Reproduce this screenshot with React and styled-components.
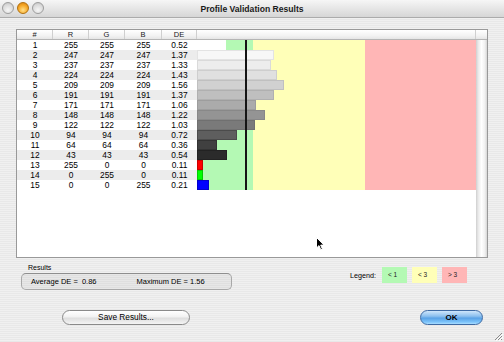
import React from 'react';
import styled, { createGlobalStyle } from 'styled-components';

const GlobalStyle = createGlobalStyle`
  html, body { margin: 0; padding: 0; background: #e9e9e9; }
  body { font-family: "Liberation Sans", Arial, sans-serif; color: #000; }
  * { box-sizing: border-box; }
`;

const data = [
  [1, 255, 255, 255, '0.52'],
  [2, 247, 247, 247, '1.37'],
  [3, 237, 237, 237, '1.33'],
  [4, 224, 224, 224, '1.43'],
  [5, 209, 209, 209, '1.56'],
  [6, 191, 191, 191, '1.37'],
  [7, 171, 171, 171, '1.06'],
  [8, 148, 148, 148, '1.22'],
  [9, 122, 122, 122, '1.03'],
  [10, 94, 94, 94, '0.72'],
  [11, 64, 64, 64, '0.36'],
  [12, 43, 43, 43, '0.54'],
  [13, 255, 0, 0, '0.11'],
  [14, 0, 255, 0, '0.11'],
  [15, 0, 0, 255, '0.21'],
];

const COLS = [36, 36, 36, 37, 35];
const SCALE = 56;
const GREEN = '#b4f9b4';
const YELLOW = '#ffffb8';
const PINK = '#ffb6b6';

const Window = styled.div`
  position: relative;
  width: 504px;
  height: 342px;
  overflow: hidden;
  display: flex;
  flex-direction: column;
  background: repeating-linear-gradient(to bottom, #f0f0f0 0px, #f0f0f0 1px, #e8e8e8 1px, #e8e8e8 2px);
`;

const TitleBar = styled.div`
  position: relative;
  height: 18px;
  flex: none;
  display: flex;
  align-items: center;
  justify-content: center;
  background: linear-gradient(to bottom, #f6f6f6 0%, #e6e6e6 50%, #d6d6d6 100%);
  border-bottom: 1px solid #ababab;
`;

const Lights = styled.div`
  position: absolute;
  left: 2px;
  top: 2px;
  display: flex;
  gap: 3px;
`;

const Light = styled.span`
  width: 12px;
  height: 12px;
  border-radius: 50%;
  border: 1px solid ${p => (p.$active ? '#b0700f' : '#9d9d9d')};
  background: ${p =>
    p.$active
      ? 'radial-gradient(circle at 50% 70%, #ffe08a 0%, #f6a827 55%, #d67c0a 100%)'
      : 'radial-gradient(circle at 50% 70%, #f6f6f6 0%, #dadada 60%, #bcbcbc 100%)'};
`;

const Title = styled.div`
  font-size: 8.6px;
  font-weight: bold;
  color: #1a1a1a;
`;

const Content = styled.div`
  flex: 1;
  display: flex;
  flex-direction: column;
  padding: 11px 16px 0 16px;
`;

const Table = styled.div`
  width: 472px;
  height: 229px;
  border: 1px solid #999;
  background: #fff;
  display: flex;
`;

const TableMain = styled.div`
  flex: 1;
  display: flex;
  flex-direction: column;
`;

const HeaderRow = styled.div`
  height: 10px;
  display: flex;
  border-bottom: 1px solid #b5b5b5;
  background: linear-gradient(to bottom, #ffffff 0%, #f3f3f3 60%, #e6e6e6 100%);
`;

const HeaderCell = styled.div`
  width: ${p => (p.$w ? `${p.$w}px` : 'auto')};
  flex: ${p => (p.$w ? 'none' : '1')};
  border-right: 1px solid #cfcfcf;
  font-size: 7.5px;
  line-height: 9px;
  text-align: center;
  color: #1a1a1a;
`;

const Body = styled.div`
  flex: 1;
  display: flex;
  align-items: flex-start;
`;

const DataList = styled.div`
  width: 180px;
  display: flex;
  flex-direction: column;
`;

const DataRow = styled.div`
  height: 10px;
  display: flex;
  background: ${p => (p.$even ? '#ececec' : '#ffffff')};
`;

const DataCell = styled.div`
  width: ${p => p.$w}px;
  font-size: 8.4px;
  line-height: 10px;
  text-align: center;
  color: #000;
`;

const Chart = styled.div`
  position: relative;
  flex: 1;
  height: 150px;
  display: flex;
  flex-direction: column;
  background: linear-gradient(
    to right,
    ${GREEN} 0px, ${GREEN} 56px,
    ${YELLOW} 56px, ${YELLOW} 168px,
    ${PINK} 168px, ${PINK} 100%
  );
`;

const ChartRow = styled.div`
  height: 10px;
  display: flex;
`;

const Bar = styled.div`
  height: 10px;
  box-shadow: inset 0 0 0 1px rgba(0, 0, 0, ${p => p.$edge});
`;

const AvgLine = styled.div`
  position: absolute;
  top: 0;
  bottom: 0;
  left: 48px;
  width: 2px;
  background: #151515;
`;

const ScrollCol = styled.div`
  width: 11px;
  flex: none;
  display: flex;
  flex-direction: column;
`;

const ScrollCorner = styled.div`
  height: 10px;
  border-bottom: 1px solid #b5b5b5;
  background: linear-gradient(to bottom, #ffffff 0%, #f3f3f3 60%, #e6e6e6 100%);
`;

const ScrollTrack = styled.div`
  flex: 1;
  background: linear-gradient(to right, #cfcfcf 0%, #e9e9e9 20%, #ffffff 50%, #f1f1f1 80%, #d6d6d6 100%);
`;

const FooterRow = styled.div`
  display: flex;
  justify-content: space-between;
  align-items: flex-start;
  margin-top: 5px;
  padding: 0 21px 0 5px;
`;

const Group = styled.div`
  display: flex;
  flex-direction: column;
`;

const GroupLabel = styled.div`
  font-size: 7px;
  line-height: 9px;
  padding-left: 7px;
  color: #000;
`;

const GroupBox = styled.div`
  margin-top: 1px;
  width: 211px;
  height: 17px;
  border: 1px solid #a8a8a8;
  border-top-color: #8e8e8e;
  border-radius: 5px;
  background: rgba(0, 0, 0, 0.035);
  display: flex;
  align-items: center;
  gap: 40px;
  padding-left: 9px;
`;

const Stat = styled.span`
  font-size: 7.5px;
  white-space: pre;
  color: #000;
`;

const Legend = styled.div`
  margin-top: 4px;
  display: flex;
  align-items: center;
  gap: 5px;
`;

const LegendLabel = styled.span`
  font-size: 7.2px;
  margin-right: 1px;
  color: #000;
`;

const Swatch = styled.div`
  width: 25px;
  height: 16px;
  background: ${p => p.$bg};
  font-size: 6.5px;
  line-height: 16px;
  padding-left: 6px;
  white-space: pre;
  color: #222;
`;

const ButtonRow = styled.div`
  margin-top: 20px;
  display: flex;
  justify-content: space-between;
  padding: 0 5px 0 46px;
`;

const PushButton = styled.div`
  width: 128px;
  height: 15px;
  border-radius: 8px;
  border: 1px solid #8a8a8a;
  background: linear-gradient(to bottom, #ffffff 0%, #f2f2f2 45%, #dedede 55%, #f4f4f4 100%);
  font-size: 8.3px;
  line-height: 13px;
  text-align: center;
  color: #000;
`;

const DefaultButton = styled(PushButton)`
  width: 63px;
  border-color: #3e6aa3;
  background: linear-gradient(to bottom, #cfe6fb 0%, #8cc0ef 40%, #5aa2e6 55%, #7cc4fb 85%, #a9dcff 100%);
  font-weight: bold;
  font-size: 8px;
`;

const Grip = styled.svg`
  position: absolute;
  right: 1px;
  bottom: 1px;
`;

const Cursor = styled.svg`
  position: absolute;
  left: 316px;
  top: 237px;
`;

export default function App() {
  return (
    <>
      <GlobalStyle />
      <Window>
        <TitleBar>
          <Lights>
            <Light />
            <Light $active />
            <Light />
          </Lights>
          <Title>Profile Validation Results</Title>
        </TitleBar>
        <Content>
          <Table>
            <TableMain>
              <HeaderRow>
                <HeaderCell $w={COLS[0]}>#</HeaderCell>
                <HeaderCell $w={COLS[1]}>R</HeaderCell>
                <HeaderCell $w={COLS[2]}>G</HeaderCell>
                <HeaderCell $w={COLS[3]}>B</HeaderCell>
                <HeaderCell $w={COLS[4]}>DE</HeaderCell>
                <HeaderCell />
              </HeaderRow>
              <Body>
                <DataList>
                  {data.map((r, i) => (
                    <DataRow key={r[0]} $even={i % 2 === 1}>
                      {r.map((v, j) => (
                        <DataCell key={j} $w={COLS[j]}>{v}</DataCell>
                      ))}
                    </DataRow>
                  ))}
                </DataList>
                <Chart>
                  {data.map(r => {
                    const lum = (r[1] + r[2] + r[3]) / 3;
                    return (
                      <ChartRow key={r[0]}>
                        <Bar
                          $edge={lum > 250 ? 0 : lum > 100 ? 0.08 : 0.2}
                          style={{
                            width: `${Math.round(parseFloat(r[4]) * SCALE)}px`,
                            background: `rgb(${r[1]},${r[2]},${r[3]})`,
                          }}
                        />
                      </ChartRow>
                    );
                  })}
                  <AvgLine />
                </Chart>
              </Body>
            </TableMain>
            <ScrollCol>
              <ScrollCorner />
              <ScrollTrack />
            </ScrollCol>
          </Table>
          <FooterRow>
            <Group>
              <GroupLabel>Results</GroupLabel>
              <GroupBox>
                <Stat>{'Average DE =  0.86'}</Stat>
                <Stat>{'Maximum DE = 1.56'}</Stat>
              </GroupBox>
            </Group>
            <Legend>
              <LegendLabel>Legend:</LegendLabel>
              <Swatch $bg={GREEN}>{'< 1'}</Swatch>
              <Swatch $bg={YELLOW}>{'< 3'}</Swatch>
              <Swatch $bg={PINK}>{'> 3'}</Swatch>
            </Legend>
          </FooterRow>
          <ButtonRow>
            <PushButton>Save Results...</PushButton>
            <DefaultButton>OK</DefaultButton>
          </ButtonRow>
        </Content>
        <Grip width="10" height="10" viewBox="0 0 10 10">
          <path d="M9 2 L2 9 M9 5 L5 9 M9 8 L8 9" stroke="#8a8a8a" strokeWidth="1" />
          <path d="M10 3 L3 10 M10 6 L6 10" stroke="#ffffff" strokeWidth="1" />
        </Grip>
        <Cursor width="9" height="14" viewBox="0 0 9 14">
          <path d="M0.5 0.5 L0.5 11 L3 8.6 L4.8 12.8 L6.4 12.1 L4.7 8.1 L8 8.1 Z" fill="#000" stroke="#fff" strokeWidth="1" />
        </Cursor>
      </Window>
    </>
  );
}
